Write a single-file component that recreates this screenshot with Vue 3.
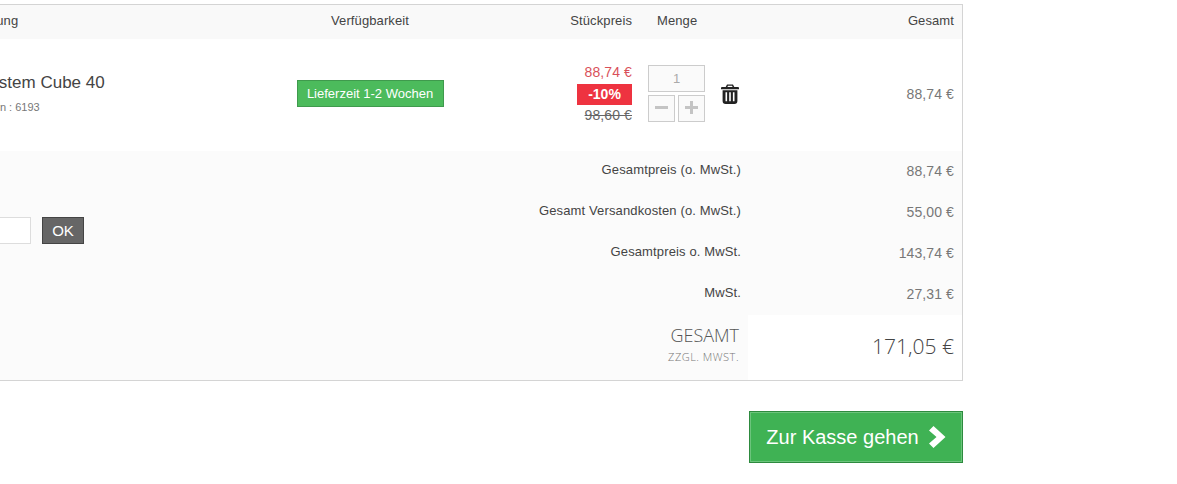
<script setup>
const totals = [
  { label: 'Gesamtpreis (o. MwSt.)', value: '88,74 €' },
  { label: 'Gesamt Versandkosten (o. MwSt.)', value: '55,00 €' },
  { label: 'Gesamtpreis o. MwSt.', value: '143,74 €' },
  { label: 'MwSt.', value: '27,31 €' }
]
</script>

<template>
  <div class="page">
    <div class="cart">
      <div class="row head">
        <div class="col-name"><span class="shift">Bezeichnung</span></div>
        <div class="col-avail">Verfügbarkeit</div>
        <div class="col-price">Stückpreis</div>
        <div class="col-qty">Menge</div>
        <div class="col-total">Gesamt</div>
      </div>

      <div class="row item">
        <div class="col-name">
          <div class="title">System Cube 40</div>
          <div class="sku">Artikelnummern : 6193</div>
        </div>
        <div class="col-avail"><span class="stock">Lieferzeit 1-2 Wochen</span></div>
        <div class="col-price">
          <div class="now">88,74 €</div>
          <div class="discount">-10%</div>
          <div class="was">98,60 €</div>
        </div>
        <div class="col-qty">
          <input class="qty" value="1" readonly />
          <div class="steppers">
            <span class="step"><span class="bar"></span></span>
            <span class="step"><span class="bar"></span><span class="bar vert"></span></span>
          </div>
        </div>
        <svg class="trash" viewBox="0 0 18 20" width="18" height="20">
          <path fill="#222" fill-rule="evenodd" d="M6 0.5h6l1.3 2.5H17a1 1 0 0 1 1 1v1.2H0V4a1 1 0 0 1 1-1h3.7zM7 1.8l-.6 1.2h5.2L11 1.8zM1.6 6.2h14.8V17a3 3 0 0 1-3 3H4.600a3 3 0 0 1-3-3zM4.500 8.200v9h1.600v-9zM8.200 8.200v9h1.600v-9zM11.900 8.200v9h1.600v-9z" />
        </svg>
        <div class="col-total">88,74 €</div>
      </div>

      <div class="summary">
        <div class="voucher">
          <input class="code" />
          <span class="ok">OK</span>
        </div>
        <div class="lines">
          <div v-for="t in totals" :key="t.label" class="line">
            <div class="line-label">{{ t.label }}</div>
            <div class="line-value">{{ t.value }}</div>
          </div>
          <div class="grand">
            <div class="grand-label">
              <div class="big">GESAMT</div>
              <div class="small">ZZGL. MWST.</div>
            </div>
            <div class="grand-value">171,05 €</div>
          </div>
        </div>
      </div>
    </div>

    <div class="actions">
      <span class="checkout">
        Zur Kasse gehen
        <svg viewBox="0 0 18 24" width="18" height="24">
          <path fill="#fff" d="M5.500 1 L17.500 12 L5.500 23 L1 18.500 L8.500 12 L1 5.500 Z" />
        </svg>
      </span>
    </div>
  </div>
</template>

<style>
html, body {
  margin: 0;
  background: #fff;
  overflow: hidden;
}
</style>

<style scoped>
.page {
  width: 1177px;
  height: 484px;
  overflow: hidden;
  padding-top: 4px;
  box-sizing: border-box;
  font-family: "Liberation Sans", Arial, sans-serif;
  color: #555;
}

.cart {
  width: 963px;
  box-sizing: border-box;
  border: 1px solid #d4d4d4;
  border-left: 0;
}

.row {
  display: flex;
  align-items: center;
}

.head {
  height: 34px;
  box-sizing: border-box;
  padding-bottom: 4px;
  background: #f9f9f9;
  font-size: 13px;
  letter-spacing: 0.1px;
  color: #444;
}

.item {
  height: 112px;
  box-sizing: border-box;
  padding-bottom: 4px;
  background: #fff;
}

.col-name {
  width: 270px;
  flex: none;
  overflow: hidden;
  white-space: nowrap;
}

.shift {
  margin-left: -58px;
}

.title {
  margin-left: -21px;
  font-size: 17px;
  color: #444;
  line-height: 22px;
}

.sku {
  margin-left: -71px;
  margin-top: 6px;
  font-size: 11px;
  color: #777;
  line-height: 14px;
}

.col-avail {
  width: 200px;
  flex: none;
  text-align: center;
}

.stock {
  display: inline-block;
  width: 147px;
  height: 27px;
  box-sizing: border-box;
  line-height: 25px;
  background: #4cbb5c;
  border: 1px solid #3f9a4d;
  color: #fff;
  font-size: 13px;
  vertical-align: top;
}

.col-price {
  width: 162px;
  flex: none;
  text-align: right;
}

.now {
  font-size: 14px;
  letter-spacing: 0.1px;
  line-height: 16px;
  color: #d9505a;
}

.discount {
  display: inline-block;
  width: 55px;
  height: 21px;
  line-height: 21px;
  margin: 4px 0 2px;
  background: #ee3340;
  color: #fff;
  font-size: 14px;
  font-weight: bold;
  text-align: center;
  vertical-align: top;
}

.was {
  font-size: 14px;
  letter-spacing: 0.1px;
  line-height: 16px;
  color: #666;
  text-decoration: line-through;
}

.col-qty {
  width: 57px;
  flex: none;
  margin-left: 16px;
  text-align: center;
}

.head .col-qty {
  text-align: left;
  padding-left: 9px;
  box-sizing: border-box;
}

.qty {
  display: block;
  width: 57px;
  height: 27px;
  box-sizing: border-box;
  border: 1px solid #ccc;
  background: #fafafa;
  color: #aaa;
  font: 13px "Liberation Sans", Arial, sans-serif;
  text-align: center;
  padding: 0;
  outline: none;
}

.steppers {
  display: flex;
  justify-content: space-between;
  margin-top: 3px;
}

.step {
  position: relative;
  width: 27px;
  height: 27px;
  box-sizing: border-box;
  border: 1px solid #ccc;
  background: #fafafa;
}

.bar {
  position: absolute;
  left: 6px;
  top: 10px;
  width: 13px;
  height: 3px;
  background: #c4c4c4;
}

.bar.vert {
  left: 11px;
  top: 5px;
  width: 3px;
  height: 13px;
}

.trash {
  flex: none;
  margin: 2px 0 0 16px;
}

.col-total {
  flex: 1;
  text-align: right;
  padding-right: 8px;
}

.item .col-total {
  margin-top: 2px;
  font-size: 14px;
  letter-spacing: 0.1px;
  color: #777;
}

.summary {
  display: flex;
  height: 229px;
  background: #fbfbfb;
}

.voucher {
  width: 270px;
  flex: none;
  display: flex;
  align-items: flex-start;
  padding-top: 66px;
  box-sizing: border-box;
}

.code {
  width: 31px;
  height: 27px;
  box-sizing: border-box;
  border: 1px solid #ddd;
  border-left: 0;
  background: #fff;
  padding: 0;
  outline: none;
}

.ok {
  display: block;
  width: 42px;
  height: 27px;
  margin-left: 11px;
  box-sizing: border-box;
  line-height: 25px;
  background: #666;
  border: 1px solid #444;
  color: #fff;
  font-size: 15px;
  text-align: center;
}

.lines {
  flex: 1;
}

.line {
  display: flex;
  height: 41px;
}

.line-label {
  width: 471px;
  flex: none;
  text-align: right;
  font-size: 13px;
  letter-spacing: 0.13px;
  color: #444;
  line-height: 38px;
}

.line-value {
  flex: 1;
  text-align: right;
  padding-right: 8px;
  font-size: 14px;
  letter-spacing: 0.1px;
  color: #777;
  line-height: 40px;
}

.grand {
  display: flex;
  height: 65px;
}

.grand-label {
  width: 478px;
  flex: none;
  text-align: right;
  font-family: "Open Sans", sans-serif;
  font-weight: 300;
  color: #555;
  padding: 8px 9px 0 0;
  box-sizing: border-box;
}

.big {
  font-size: 18px;
  line-height: 24px;
}

.small {
  margin-top: 1px;
  font-size: 11px;
  line-height: 18px;
  color: #777;
  letter-spacing: 0.5px;
}

.grand-value {
  flex: 1;
  background: #fff;
  text-align: right;
  padding-right: 8px;
  font-family: "Open Sans", sans-serif;
  font-weight: 300;
  font-size: 21px;
  line-height: 62px;
  color: #444;
}

.actions {
  width: 963px;
  display: flex;
  justify-content: flex-end;
  margin-top: 30px;
}

.checkout {
  display: flex;
  align-items: center;
  justify-content: center;
  gap: 9px;
  width: 214px;
  height: 52px;
  box-sizing: border-box;
  background: #3fb254;
  border: 1px solid #2d8a3e;
  box-shadow: inset 0 0 0 1px #6cc47c;
  color: #fff;
  font-size: 20px;
}
</style>
